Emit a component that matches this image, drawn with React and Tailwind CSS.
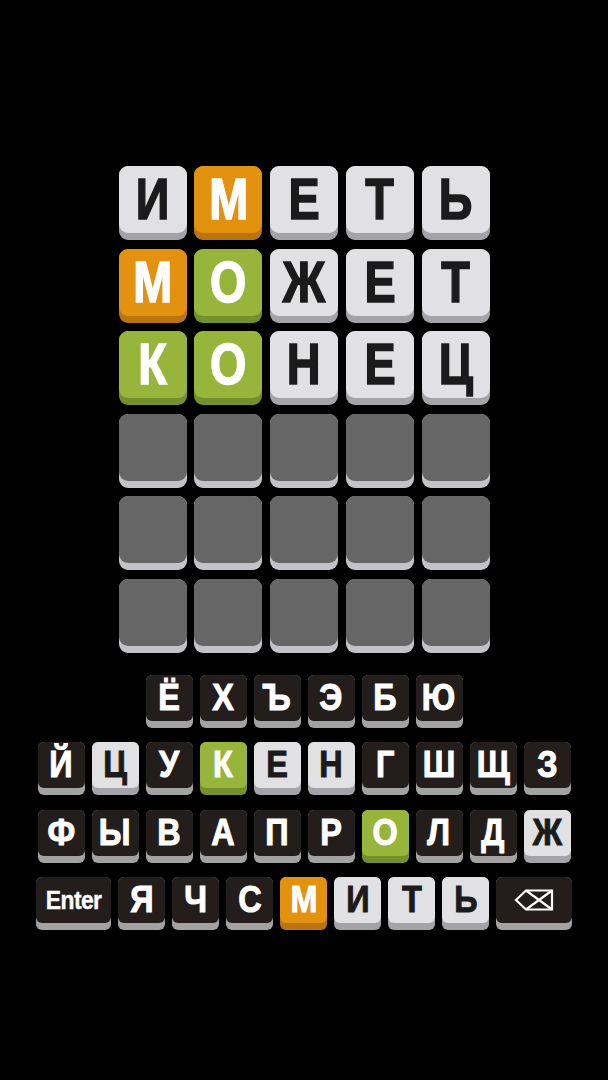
const GRID = [
  [['И', 'gray'], ['М', 'orange'], ['Е', 'gray'], ['Т', 'gray'], ['Ь', 'gray']],
  [['М', 'orange'], ['О', 'green'], ['Ж', 'gray'], ['Е', 'gray'], ['Т', 'gray']],
  [['К', 'green'], ['О', 'green'], ['Н', 'gray'], ['Е', 'gray'], ['Ц', 'gray']],
  [['', 'empty'], ['', 'empty'], ['', 'empty'], ['', 'empty'], ['', 'empty']],
  [['', 'empty'], ['', 'empty'], ['', 'empty'], ['', 'empty'], ['', 'empty']],
  [['', 'empty'], ['', 'empty'], ['', 'empty'], ['', 'empty'], ['', 'empty']],
];

const KEYS = [
  [['Ё', 'dark'], ['Х', 'dark'], ['Ъ', 'dark'], ['Э', 'dark'], ['Б', 'dark'], ['Ю', 'dark']],
  [['Й', 'dark'], ['Ц', 'gray'], ['У', 'dark'], ['К', 'green'], ['Е', 'gray'], ['Н', 'gray'], ['Г', 'dark'], ['Ш', 'dark'], ['Щ', 'dark'], ['З', 'dark']],
  [['Ф', 'dark'], ['Ы', 'dark'], ['В', 'dark'], ['А', 'dark'], ['П', 'dark'], ['Р', 'dark'], ['О', 'green'], ['Л', 'dark'], ['Д', 'dark'], ['Ж', 'gray']],
  [['Enter', 'dark'], ['Я', 'dark'], ['Ч', 'dark'], ['С', 'dark'], ['М', 'orange'], ['И', 'gray'], ['Т', 'gray'], ['Ь', 'gray'], ['⌫', 'dark']],
];

// lip colour (outer) + face colour (inner) + text colour
const TONES = {
  gray: { lip: 'bg-[#a4a4a8]', face: 'bg-[#e1e1e3]', text: 'text-[#1b1b1b]' },
  orange: { lip: 'bg-[#bb7510]', face: 'bg-[#e3920f]', text: 'text-white' },
  green: { lip: 'bg-[#74902c]', face: 'bg-[#98b53b]', text: 'text-white' },
  empty: { lip: 'bg-[#c3c3c7]', face: 'bg-[#666666]', text: 'text-white' },
  dark: { lip: 'bg-[#a2a2a2]', face: 'bg-[#231d1b]', text: 'text-white' },
};

const BackspaceIcon = () => (
  <svg width="40" height="22" viewBox="0 0 40 22" fill="none" stroke="white" strokeWidth="2.2" strokeLinejoin="miter">
    <path d="M2 11 L12 1.5 H38 V20.5 H12 Z" />
    <path d="M12 1.5 L38 20.5 M12 20.5 L38 1.5" />
  </svg>
);

const Tile = ({ letter, tone }) => {
  const t = TONES[tone];
  return (
    <div className={`w-[68px] h-[74px] rounded-[9px] pb-[7px] ${t.lip}`}>
      <div className={`h-full rounded-[9px] flex items-center justify-center ${t.face}`}>
        <span className={`font-bold text-[57px] leading-none scale-x-[0.82] [-webkit-text-stroke:1.6px_currentcolor] ${t.text}`}>{letter}</span>
      </div>
    </div>
  );
};

const Key = ({ label, tone }) => {
  const t = TONES[tone];
  const wide = label === 'Enter' || label === '⌫';
  return (
    <div className={`${label === 'Enter' ? 'w-[75px]' : wide ? 'w-[76px]' : 'w-[47px]'} h-[53px] rounded-[6px] pb-[7px] ${t.lip}`}>
      <div className={`h-full rounded-[6px] flex items-center justify-center ${t.face}`}>
        {label === '⌫' ? (
          <BackspaceIcon />
        ) : label === 'Enter' ? (
          <span className={`font-bold text-[26px] leading-none scale-x-[0.88] tracking-tight [-webkit-text-stroke:0.4px_currentcolor] ${t.text}`}>Enter</span>
        ) : (
          <span className={`font-bold text-[36px] leading-none scale-x-[0.9] [-webkit-text-stroke:1px_currentcolor] ${t.text}`}>{label}</span>
        )}
      </div>
    </div>
  );
};

export default function App() {
  return (
    <div className="w-full h-[1080px] bg-black flex flex-col items-center pt-[166px]" style={{ fontFamily: '"Liberation Sans", Arial, sans-serif' }}>
      <div className="flex flex-col gap-y-[8.6px]">
        {GRID.map((row, r) => (
          <div key={r} className="flex gap-x-[7.75px]">
            {row.map(([letter, tone], c) => (
              <Tile key={c} letter={letter} tone={tone} />
            ))}
          </div>
        ))}
      </div>

      <div className="mt-[22px] flex flex-col items-center gap-y-[14.3px]">
        {KEYS.map((row, r) => (
          <div key={r} className="flex gap-x-[7px]">
            {row.map(([label, tone], c) => (
              <Key key={c} label={label} tone={tone} />
            ))}
          </div>
        ))}
      </div>
    </div>
  );
}
